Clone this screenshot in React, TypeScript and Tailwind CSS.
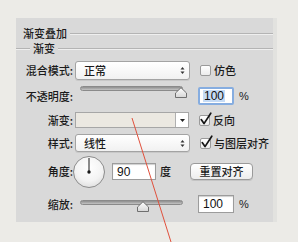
import React from 'react';

const FONT = '"Noto Sans CJK SC", "Noto Sans", sans-serif';

function Groove({ className = '' }: { className?: string }) {
  return <div className={`h-[2px] border-t border-b border-t-[#b4b4b4] border-b-[#efefef] ${className}`} />;
}

function Label({ text, w = 'w-[57px]' }: { text: string; w?: string }) {
  return <div className={`${w} shrink-0 text-right text-[11px] font-medium leading-none text-[#1a1a1a]`}>{text}</div>;
}

function UpDown() {
  return (
    <svg width="5" height="9" viewBox="0 0 5 9" className="shrink-0">
      <path d="M0.5 3.5 L2.5 1 L4.5 3.5 Z" fill="#333" />
      <path d="M0.5 5.5 L2.5 8 L4.5 5.5 Z" fill="#333" />
    </svg>
  );
}

function Select({ value, h }: { value: string; h: string }) {
  return (
    <div
      className={`ml-[2px] w-[115px] ${h} flex items-center justify-between pl-[8px] pr-[4px] rounded-[3px] border border-[#a3a3a3] bg-gradient-to-b from-[#ffffff] to-[#f1f1f1] text-[11px] font-medium text-[#1a1a1a] leading-none shadow-[0_1px_0_#c8c8c8]`}
    >
      <span>{value}</span>
      <UpDown />
    </div>
  );
}

function Checkbox({ checked }: { checked?: boolean }) {
  return (
    <div className="relative ml-[10px] w-[11px] h-[11px] shrink-0 rounded-[2px] border border-[#9a9a9a] bg-gradient-to-b from-[#ffffff] to-[#ececec]">
      {checked && (
        <svg width="14" height="14" viewBox="0 0 14 14" className="absolute left-[-1px] top-[-4px]">
          <path d="M2.2 7.6 L5 11.6 L11.8 1.2" fill="none" stroke="#151515" strokeWidth="1.7" strokeLinecap="round" strokeLinejoin="round" />
        </svg>
      )}
    </div>
  );
}

function Thumb() {
  return (
    <svg width="12" height="11" viewBox="0 0 12 11">
      <defs>
        <linearGradient id="tg" x1="0" y1="0" x2="0" y2="1">
          <stop offset="0" stopColor="#ffffff" />
          <stop offset="1" stopColor="#d6d6d6" />
        </linearGradient>
      </defs>
      <path d="M0.5 10.5 L0.5 6 L6 0.7 L11.5 6 L11.5 10.5 Z" fill="url(#tg)" stroke="#6f6f6f" strokeWidth="1" />
    </svg>
  );
}

function Slider({ thumbLeft, trackTop, thumbTop }: { thumbLeft: string; trackTop: string; thumbTop: string }) {
  return (
    <div className="relative ml-[2px] w-[115px] h-full shrink-0">
      <div
        className={`absolute left-[5px] ${trackTop} w-[103px] h-[5px] rounded-full bg-gradient-to-b from-[#8e8e8e] to-[#c4c4c4] border border-[#8a8a8a]`}
      />
      <div className={`absolute ${thumbLeft} ${thumbTop}`}>
        <Thumb />
      </div>
    </div>
  );
}

function NumberBox({ value, focused, w = 'w-[36px]', ml = 'ml-[8px]', h = 'h-[18px]' }: { value: string; focused?: boolean; w?: string; ml?: string; h?: string }) {
  return (
    <div
      className={`${ml} ${w} ${h} shrink-0 flex items-center pl-[3px] bg-white text-[12px] leading-none text-[#111] ${
        focused ? 'border-2 border-[#86ade0] rounded-[2px]' : 'border border-[#9c9c9c] shadow-[inset_0_1px_1px_#cfcfcf]'
      }`}
      style={{ fontFamily: '"Liberation Sans", Arial, sans-serif' }}
    >
      <span className={focused ? 'bg-[#c5dbf5] px-[1px]' : 'px-[1px]'}>{value}</span>
    </div>
  );
}

function Dial() {
  return (
    <div className="relative w-[32px] h-[32px] shrink-0 rounded-full border border-[#8c8c8c] bg-[radial-gradient(circle_at_50%_35%,#ffffff_0%,#f3f3f3_55%,#d3d3d3_100%)]">
      <svg width="32" height="32" viewBox="0 0 32 32" className="absolute left-[-1px] top-[-1px]">
        <line x1="16" y1="16" x2="16" y2="2" stroke="#1a1a1a" strokeWidth="1" />
        <circle cx="16" cy="16" r="1.7" fill="#1a1a1a" />
      </svg>
    </div>
  );
}

export default function App() {
  return (
    <div
      className="relative w-[298px] h-[242px] overflow-hidden bg-[#ecebe7] pt-[18px] pl-[16px]"
      style={{ fontFamily: FONT }}
    >
      <div className="w-[261px] h-[204px] bg-[#d9d9d9] border-r-4 border-r-[#e2e2df] flex flex-col">
        {/* titre du panneau */}
        <div className="mt-[8px] h-[15px] flex items-center pl-[7px]">
          <span className="text-[11px] font-medium leading-none text-[#1a1a1a]">渐变叠加</span>
          <Groove className="flex-1 ml-[3px]" />
        </div>

        {/* groupe : 渐变 */}
        <div className="h-[15px] flex items-center">
          <Groove className="w-[14px]" />
          <span className="ml-[3px] text-[11px] font-medium leading-none text-[#1a1a1a]">渐变</span>
          <Groove className="flex-1 ml-[3px]" />
        </div>

        <div className="mt-[5px] h-[19px] flex items-center">
          <Label text="混合模式:" />
          <Select value="正常" h="h-[19px]" />
          <Checkbox />
          <span className="ml-[3px] text-[11px] font-medium leading-none text-[#1a1a1a]">仿色</span>
        </div>

        <div className="mt-[6px] h-[20px] flex items-center">
          <Label text="不透明度:" />
          <Slider thumbLeft="left-[100px]" trackTop="top-[0px]" thumbTop="top-[1px]" />
          <NumberBox value="100" focused h="h-[18px]" />
          <span className="ml-[5px] text-[11px] leading-none text-[#1a1a1a]" style={{ fontFamily: '"Liberation Sans", Arial, sans-serif' }}>%</span>
        </div>

        <div className="mt-[6px] h-[16px] flex items-center">
          <Label text="渐变:" />
          <div className="ml-[2px] w-[114px] h-[16px] shrink-0 flex border border-[#a6a6a6] bg-[#ebe8e1]">
            <div className="flex-1" />
            <div className="w-[13px] h-full border-l border-[#b0b0b0] bg-white flex items-center justify-center">
              <svg width="5" height="3" viewBox="0 0 5 3">
                <path d="M0 0 L5 0 L2.5 3 Z" fill="#222" />
              </svg>
            </div>
          </div>
          <Checkbox checked />
          <span className="ml-[3px] text-[11px] font-medium leading-none text-[#1a1a1a]">反向</span>
        </div>

        <div className="mt-[6px] h-[18px] flex items-center">
          <Label text="样式:" />
          <Select value="线性" h="h-[18px]" />
          <Checkbox checked />
          <span className="ml-[3px] text-[11px] font-medium leading-none text-[#1a1a1a]">与图层对齐</span>
        </div>

        <div className="mt-[3px] h-[33px] flex items-center">
          <Label text="角度:" />
          <Dial />
          <NumberBox value="90" w="w-[44px]" ml="ml-[7px]" h="h-[17px]" />
          <span className="ml-[4px] text-[11px] font-medium leading-none text-[#1a1a1a]">度</span>
          <div className="ml-[19px] w-[63px] h-[17px] shrink-0 flex items-center justify-center rounded-[4px] border border-[#9a9a9a] bg-gradient-to-b from-[#ffffff] to-[#ededed] text-[11px] font-medium leading-none text-[#1a1a1a] shadow-[0_1px_0_#c4c4c4]">
            重置对齐
          </div>
        </div>

        <div className="mt-[7px] h-[18px] flex items-center">
          <Label text="缩放:" />
          <Slider thumbLeft="left-[62px]" trackTop="top-[5px]" thumbTop="top-[6px]" />
          <NumberBox value="100" h="h-[18px]" />
          <span className="ml-[5px] text-[11px] leading-none text-[#1a1a1a]" style={{ fontFamily: '"Liberation Sans", Arial, sans-serif' }}>%</span>
        </div>
      </div>

      {/* trait rouge par-dessus */}
      <svg width="298" height="242" viewBox="0 0 298 242" className="absolute left-0 top-0 pointer-events-none">
        <line x1="132" y1="118" x2="171" y2="242" stroke="#e0503c" strokeWidth="1" />
      </svg>
    </div>
  );
}
